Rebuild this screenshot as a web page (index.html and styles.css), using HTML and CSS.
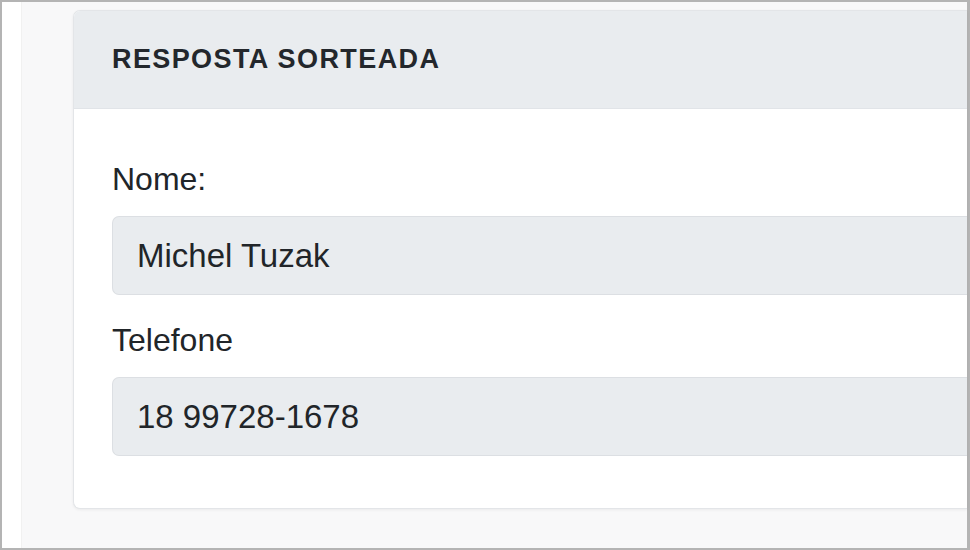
FILE: index.html
```html
<!DOCTYPE html>
<html lang="pt">
<head>
<meta charset="utf-8">
<title>Resposta sorteada</title>
<link rel="stylesheet" href="styles.css">
</head>
<body>
<div class="frame">
  <div class="strip"></div>
  <main class="content">
    <section class="card">
      <header class="card-header">
        <h2 class="card-title">RESPOSTA SORTEADA</h2>
      </header>
      <div class="card-body">
        <div class="field">
          <label class="field-label">Nome:</label>
          <div class="field-value">Michel Tuzak</div>
        </div>
        <div class="field">
          <label class="field-label">Telefone</label>
          <div class="field-value">18 99728-1678</div>
        </div>
      </div>
    </section>
  </main>
</div>
</body>
</html>
```
FILE: styles.css
```css
* { box-sizing: border-box; }
html, body { margin: 0; padding: 0; }
body {
  width: 970px;
  height: 550px;
  overflow: hidden;
  background: #ffffff;
  font-family: "Liberation Sans", Arial, sans-serif;
  color: #212529;
}
.frame {
  width: 970px;
  height: 550px;
  border: 2px solid #b4b4b4;
  border-right-width: 3px;
  display: flex;
  background: #ffffff;
}
.strip {
  width: 20px;
  flex: none;
  background: #ffffff;
  border-right: 1px solid #f1f1f1;
}
.content {
  flex: 1;
  background: #f8f8f9;
  padding: 8px 0 0 51px;
}
.card {
  background: #ffffff;
  border: 1px solid #e3e5e8;
  border-right: none;
  border-radius: 7px 0 0 7px;
  box-shadow: 0 1px 3px rgba(0,0,0,0.06);
  overflow: hidden;
}
.card-header {
  background: #e9ecef;
  height: 98px;
  display: flex;
  align-items: center;
  padding-left: 38px;
  border-bottom: 1px solid #e1e4e8;
}
.card-title {
  margin: 0;
  font-size: 27px;
  font-weight: 700;
  letter-spacing: 1.4px;
  color: #23272c;
}
.card-body {
  padding: 52px 0 52px 38px;
  display: flex;
  flex-direction: column;
  gap: 27px;
}
.field {
  display: flex;
  flex-direction: column;
  gap: 19px;
}
.field-label {
  font-size: 32px;
  line-height: 36px;
  color: #212529;
}
.field-value {
  height: 79px;
  background: #e9ecef;
  border: 1px solid #dcdfe3;
  border-right: none;
  border-radius: 7px 0 0 7px;
  font-size: 33px;
  line-height: 77px;
  padding-left: 24px;
  color: #212529;
}
```
